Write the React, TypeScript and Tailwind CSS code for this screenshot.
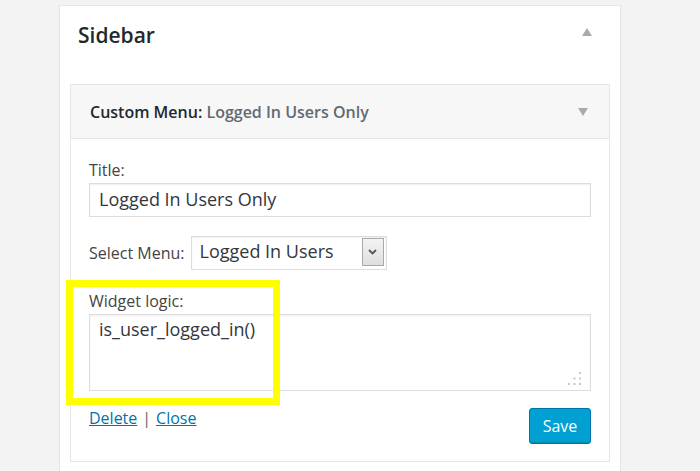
import React from "react";

export default function App() {
  return (
    <div className="relative min-h-[471px] h-[471px] overflow-hidden bg-[#f3f3f3] pl-[59px] pt-[5px] font-['Open_Sans',sans-serif]">
      <div className="w-[562px] h-[466px] bg-white border border-b-0 border-[#e5e5e5] px-[10px]">
        {/* Sidebar header */}
        <div className="h-[78px] flex justify-between items-start pl-[8px] pt-[15px]">
          <div className="text-[21px] leading-[28px] font-semibold text-[#23282d]">Sidebar</div>
          <svg width="10" height="8" viewBox="0 0 10 8" className="mt-[7px] mr-[18px]">
            <polygon points="5,0 10,8 0,8" fill="#aaaaaa" />
          </svg>
        </div>

        {/* Widget */}
        <div className="border border-[#e5e5e5]">
          <div className="h-[54px] bg-[#f7f7f7] flex items-center justify-between pl-[19px] pr-[21px] border-b border-[#e5e5e5]">
            <div className="text-[16px] leading-[22px] font-semibold text-[#23282d]">
              Custom Menu: <span className="text-[#646970]">Logged In Users Only</span>
            </div>
            <svg width="10" height="8" viewBox="0 0 10 8">
              <polygon points="0,0 10,0 5,8" fill="#aaaaaa" />
            </svg>
          </div>

          <div className="px-[18px] pt-[20px] pb-[17px] text-[#444]">
            <div className="text-[16px] leading-[22px]">Title:</div>
            <div className="mt-[2px] h-[34px] border border-[#dddddd] shadow-[inset_0_1px_2px_rgba(0,0,0,0.07)] pl-[9px] pt-[3px] text-[18px] leading-[24px] text-[#32373c]">
              Logged In Users Only
            </div>

            <div className="mt-[19px] flex items-center">
              <div className="text-[16px] leading-[22px] mr-[6px]">Select Menu:</div>
              <div className="w-[196px] h-[34px] border border-[#dddddd] shadow-[inset_0_1px_2px_rgba(0,0,0,0.07)] flex justify-between items-start">
                <div className="pl-[8px] pt-[2px] text-[18px] leading-[24px] text-[#32373c]">Logged In Users</div>
                <div className="mt-[1px] mr-[2px] w-[22px] h-[28px] border border-[#a9a9a9] bg-gradient-to-b from-[#f4f4f4] to-[#dedede] flex items-center justify-center">
                  <svg width="9" height="6" viewBox="0 0 9 6">
                    <polyline points="1,1 4.5,4.5 8,1" fill="none" stroke="#555" strokeWidth="1.8" />
                  </svg>
                </div>
              </div>
            </div>

            <div className="mt-[20px] text-[16px] leading-[22px]">Widget logic:</div>
            <div className="relative mt-[2px] h-[77px] border border-[#dddddd] shadow-[inset_0_1px_2px_rgba(0,0,0,0.07)] pl-[9px] pt-[2px] text-[18px] leading-[24px] text-[#32373c]">
              is_user_logged_in()
              <svg width="16" height="16" viewBox="0 0 16 16" className="absolute right-[7px] bottom-[4px]">
                <rect x="12" y="2" width="2" height="2" fill="#c8c8c8" />
                <rect x="6.5" y="7.5" width="2" height="2" fill="#c8c8c8" />
                <rect x="12" y="7.5" width="2" height="2" fill="#c8c8c8" />
                <rect x="1" y="13" width="2" height="2" fill="#c8c8c8" />
                <rect x="6.5" y="13" width="2" height="2" fill="#c8c8c8" />
                <rect x="12" y="13" width="2" height="2" fill="#c8c8c8" />
              </svg>
            </div>

            <div className="mt-[17px] flex justify-between items-start">
              <div className="-mt-[1px] text-[16px] leading-[22px]">
                <span className="text-[#0073aa] underline">Delete</span>
                <span className="text-[#666] mx-[5px]">|</span>
                <span className="text-[#0073aa] underline">Close</span>
              </div>
              <div className="w-[62px] h-[36px] rounded-[3px] bg-[#00a0d2] border border-[#0073aa] shadow-[inset_0_-1px_0_rgba(0,0,0,0.12)] flex items-center justify-center text-white text-[16px] leading-[22px]">
                Save
              </div>
            </div>
          </div>
        </div>
      </div>

      {/* Yellow annotation */}
      <div className="absolute left-[66px] top-[280px] w-[214px] h-[125px] border-[7px] border-[#ffff00]" />
    </div>
  );
}
